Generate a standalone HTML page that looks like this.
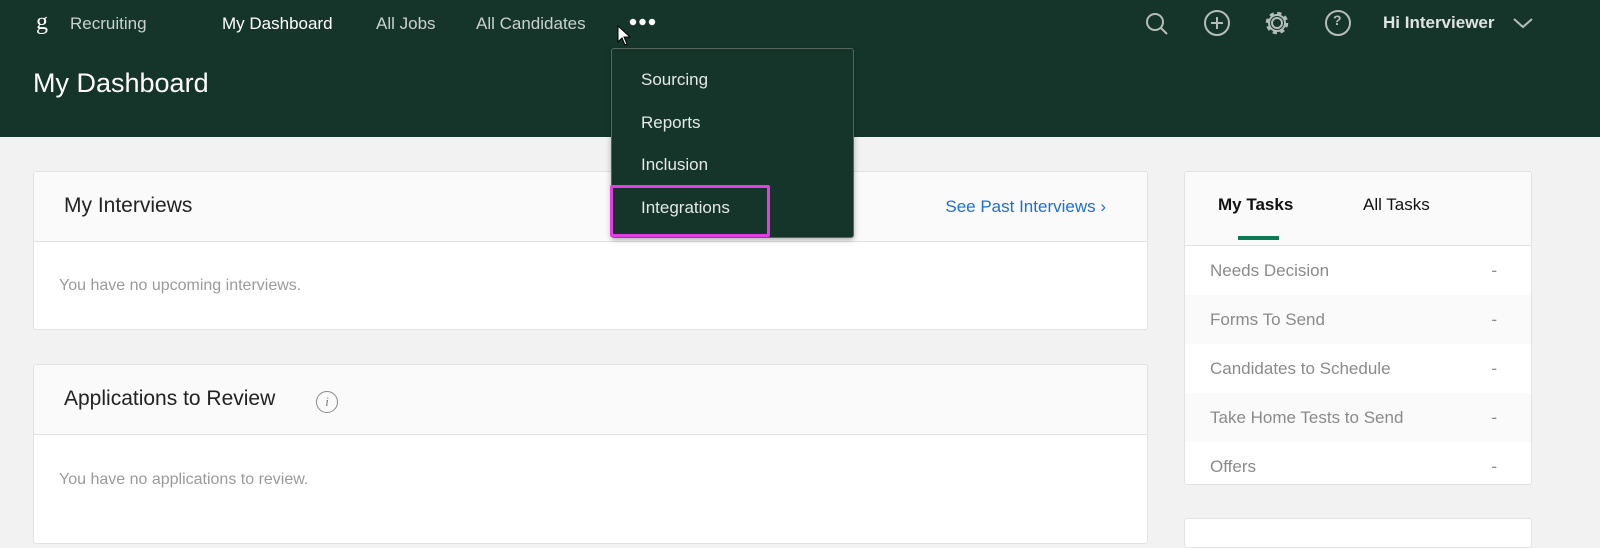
<!DOCTYPE html><html><head><style>
*{margin:0;padding:0;box-sizing:border-box}
body{width:1600px;height:534px;overflow:hidden;background:#f2f2f2;font-family:"Liberation Sans",sans-serif;position:relative}
.top{position:absolute;left:0;top:0;width:1600px;height:137px;background:#15352b}
.t{position:absolute;white-space:nowrap}
.nav{color:#c9d1cd;font-size:17px;top:14px}
.card{position:absolute;background:#fff;border:1px solid #e2e2e2;border-radius:3px;overflow:hidden}
.hd{background:#fafafa;border-bottom:1px solid #e2e2e2}
.row{position:absolute;left:0;width:100%;height:49px;color:#8a8a8a;font-size:17px;line-height:49px;padding-left:25px}
.row span{position:absolute;right:34px}
.menu{position:absolute;left:611px;top:48px;width:243px;height:190px;background:#15352b;border:1px solid #55665f;border-radius:3px;box-shadow:0 2px 6px rgba(0,0,0,.3)}
.mi{position:absolute;left:29px;color:#e4e8e6;font-size:17px}
</style></head><body>
<div class="top"></div>
<div class="t" style="left:36px;top:9px;color:#fff;font-size:24px;font-family:'Liberation Serif',serif">g</div>
<div class="t nav" style="left:70px">Recruiting</div>
<div class="t nav" style="left:222px;color:#fff">My Dashboard</div>
<div class="t nav" style="left:376px">All Jobs</div>
<div class="t nav" style="left:476px">All Candidates</div>
<svg style="position:absolute;left:628px;top:17px" width="30" height="10" fill="#fff"><circle cx="5" cy="5" r="3.2"/><circle cx="14.5" cy="5" r="3.2"/><circle cx="24" cy="5" r="3.2"/></svg>
<div class="t" style="left:33px;top:68px;color:#fff;font-size:27px">My Dashboard</div>
<svg style="position:absolute;left:1140px;top:8px" width="240" height="32" fill="none" stroke="#b5bdb9" stroke-width="2">
<circle cx="15" cy="14" r="8"/><path d="M21 20l6 6"/>
<circle cx="77" cy="15" r="12"/><path d="M77 9v12M71 15h12"/>
<circle cx="137" cy="15" r="5"/><circle cx="137" cy="15" r="9.5" stroke-width="3.5" stroke-dasharray="4 3.46"/><circle cx="137" cy="15" r="8"/>
<circle cx="198" cy="15" r="12"/>
</svg>
<div class="t" style="left:1333px;top:12px;color:#b5bdb9;font-size:14px;font-weight:bold">?</div>
<div class="t" style="left:1383px;top:13px;color:#dfe3e1;font-size:17px;font-weight:bold">Hi Interviewer</div>
<svg style="position:absolute;left:1512px;top:16px" width="22" height="14" fill="none" stroke="#b5bdb9" stroke-width="2"><path d="M2 3l9 8 9-8"/></svg>

<div class="card" style="left:33px;top:171px;width:1115px;height:159px">
<div class="hd" style="height:70px"></div>
<div class="t" style="left:30px;top:22px;font-size:21px;color:#222">My Interviews</div>
<div class="t" style="right:41px;top:25px;font-size:17px;color:#1b6ed6">See Past Interviews ›</div>
<div class="t" style="left:25px;top:105px;font-size:16px;color:#9a9a9a">You have no upcoming interviews.</div>
</div>
<div class="card" style="left:33px;top:364px;width:1115px;height:180px">
<div class="hd" style="height:70px"></div>
<div class="t" style="left:30px;top:22px;font-size:21px;color:#222">Applications to Review</div>
<div class="t" style="left:282px;top:26px;width:22px;height:22px;border:1px solid #888;border-radius:50%;font-size:13px;color:#777;text-align:center;line-height:20px;font-style:italic;font-family:'Liberation Serif',serif">i</div>
<div class="t" style="left:25px;top:106px;font-size:16px;color:#9a9a9a">You have no applications to review.</div>
</div>

<div class="card" style="left:1184px;top:171px;width:348px;height:314px">
<div class="hd" style="height:74px"></div>
<div class="t" style="left:33px;top:23px;font-size:17px;font-weight:bold;color:#111">My Tasks</div>
<div class="t" style="left:178px;top:23px;font-size:17px;color:#111">All Tasks</div>
<div style="position:absolute;left:53px;top:64px;width:41px;height:4px;background:#0c7a55"></div>
<div class="row" style="top:74px">Needs Decision<span>-</span></div>
<div class="row" style="top:123px;background:#fafafa">Forms To Send<span>-</span></div>
<div class="row" style="top:172px">Candidates to Schedule<span>-</span></div>
<div class="row" style="top:221px;background:#fafafa">Take Home Tests to Send<span>-</span></div>
<div class="row" style="top:270px">Offers<span>-</span></div>
</div>
<div class="card" style="left:1184px;top:518px;width:348px;height:30px"></div>

<div class="menu">
<div class="mi" style="top:21px">Sourcing</div>
<div class="mi" style="top:64px">Reports</div>
<div class="mi" style="top:106px">Inclusion</div>
<div class="mi" style="top:149px">Integrations</div>
</div>
<div style="position:absolute;left:610px;top:185px;width:160px;height:52px;border:3px solid #e23ee6;border-radius:2px"></div>
<svg style="position:absolute;left:617px;top:25px" width="14" height="22"><path d="M1 1v16l4-4 3 7 2-1-3-7h6z" fill="#fff" stroke="#000"/></svg>
</body></html>
